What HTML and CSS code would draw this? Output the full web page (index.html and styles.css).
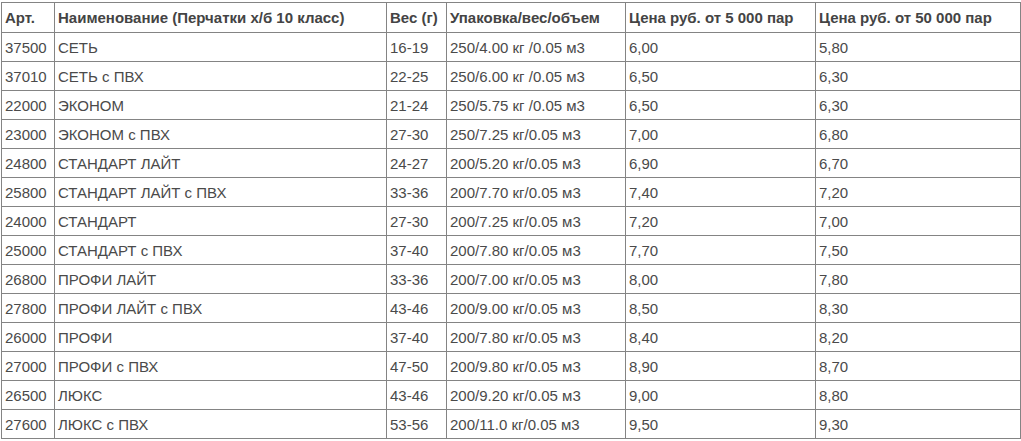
FILE: index.html
```html
<!DOCTYPE html>
<html lang="ru">
<head>
<meta charset="utf-8">
<link rel="stylesheet" href="styles.css">
</head>
<body>
<table class="price">
<colgroup>
<col class="c1"><col class="c2"><col class="c3"><col class="c4"><col class="c5"><col class="c6">
</colgroup>
<thead>
<tr><th>Арт.</th><th>Наименование (Перчатки х/б 10 класс)</th><th>Вес (г)</th><th>Упаковка/вес/объем</th><th>Цена руб. от 5 000 пар</th><th>Цена руб. от 50 000 пар</th></tr>
</thead>
<tbody>
<tr><td>37500</td><td>СЕТЬ</td><td>16-19</td><td>250/4.00 кг /0.05 м3</td><td>6,00</td><td>5,80</td></tr>
<tr><td>37010</td><td>СЕТЬ с ПВХ</td><td>22-25</td><td>250/6.00 кг /0.05 м3</td><td>6,50</td><td>6,30</td></tr>
<tr><td>22000</td><td>ЭКОНОМ</td><td>21-24</td><td>250/5.75 кг /0.05 м3</td><td>6,50</td><td>6,30</td></tr>
<tr><td>23000</td><td>ЭКОНОМ с ПВХ</td><td>27-30</td><td>250/7.25 кг/0.05 м3</td><td>7,00</td><td>6,80</td></tr>
<tr><td>24800</td><td>СТАНДАРТ ЛАЙТ</td><td>24-27</td><td>200/5.20 кг/0.05 м3</td><td>6,90</td><td>6,70</td></tr>
<tr><td>25800</td><td>СТАНДАРТ ЛАЙТ с ПВХ</td><td>33-36</td><td>200/7.70 кг/0.05 м3</td><td>7,40</td><td>7,20</td></tr>
<tr><td>24000</td><td>СТАНДАРТ</td><td>27-30</td><td>200/7.25 кг/0.05 м3</td><td>7,20</td><td>7,00</td></tr>
<tr><td>25000</td><td>СТАНДАРТ с ПВХ</td><td>37-40</td><td>200/7.80 кг/0.05 м3</td><td>7,70</td><td>7,50</td></tr>
<tr><td>26800</td><td>ПРОФИ ЛАЙТ</td><td>33-36</td><td>200/7.00 кг/0.05 м3</td><td>8,00</td><td>7,80</td></tr>
<tr><td>27800</td><td>ПРОФИ ЛАЙТ с ПВХ</td><td>43-46</td><td>200/9.00 кг/0.05 м3</td><td>8,50</td><td>8,30</td></tr>
<tr><td>26000</td><td>ПРОФИ</td><td>37-40</td><td>200/7.80 кг/0.05 м3</td><td>8,40</td><td>8,20</td></tr>
<tr><td>27000</td><td>ПРОФИ с ПВХ</td><td>47-50</td><td>200/9.80 кг/0.05 м3</td><td>8,90</td><td>8,70</td></tr>
<tr><td>26500</td><td>ЛЮКС</td><td>43-46</td><td>200/9.20 кг/0.05 м3</td><td>9,00</td><td>8,80</td></tr>
<tr><td>27600</td><td>ЛЮКС с ПВХ</td><td>53-56</td><td>200/11.0 кг/0.05 м3</td><td>9,50</td><td>9,30</td></tr>
</tbody>
</table>
</body>
</html>
```
FILE: styles.css
```css
html, body {
  margin: 0;
  background: #fff;
}
body {
  padding: 2px 0 0 1px;
  font-family: "Liberation Sans", Arial, sans-serif;
  font-size: 15px;
  color: #4a4a4a;
}
.price {
  border-collapse: collapse;
  table-layout: fixed;
  width: 1019px;
}
.c1 { width: 53px; }
.c2 { width: 332px; }
.c3 { width: 60px; }
.c4 { width: 179px; }
.c5 { width: 190px; }
.c6 { width: 205px; }
.price th, .price td {
  border: 1px solid #848484;
  padding: 0 0 0 3px;
  text-align: left;
  vertical-align: middle;
  white-space: nowrap;
  overflow: hidden;
}
.price th {
  height: 29px;
  font-weight: bold;
  color: #444;
}
.price td {
  height: 28px;
}
```
